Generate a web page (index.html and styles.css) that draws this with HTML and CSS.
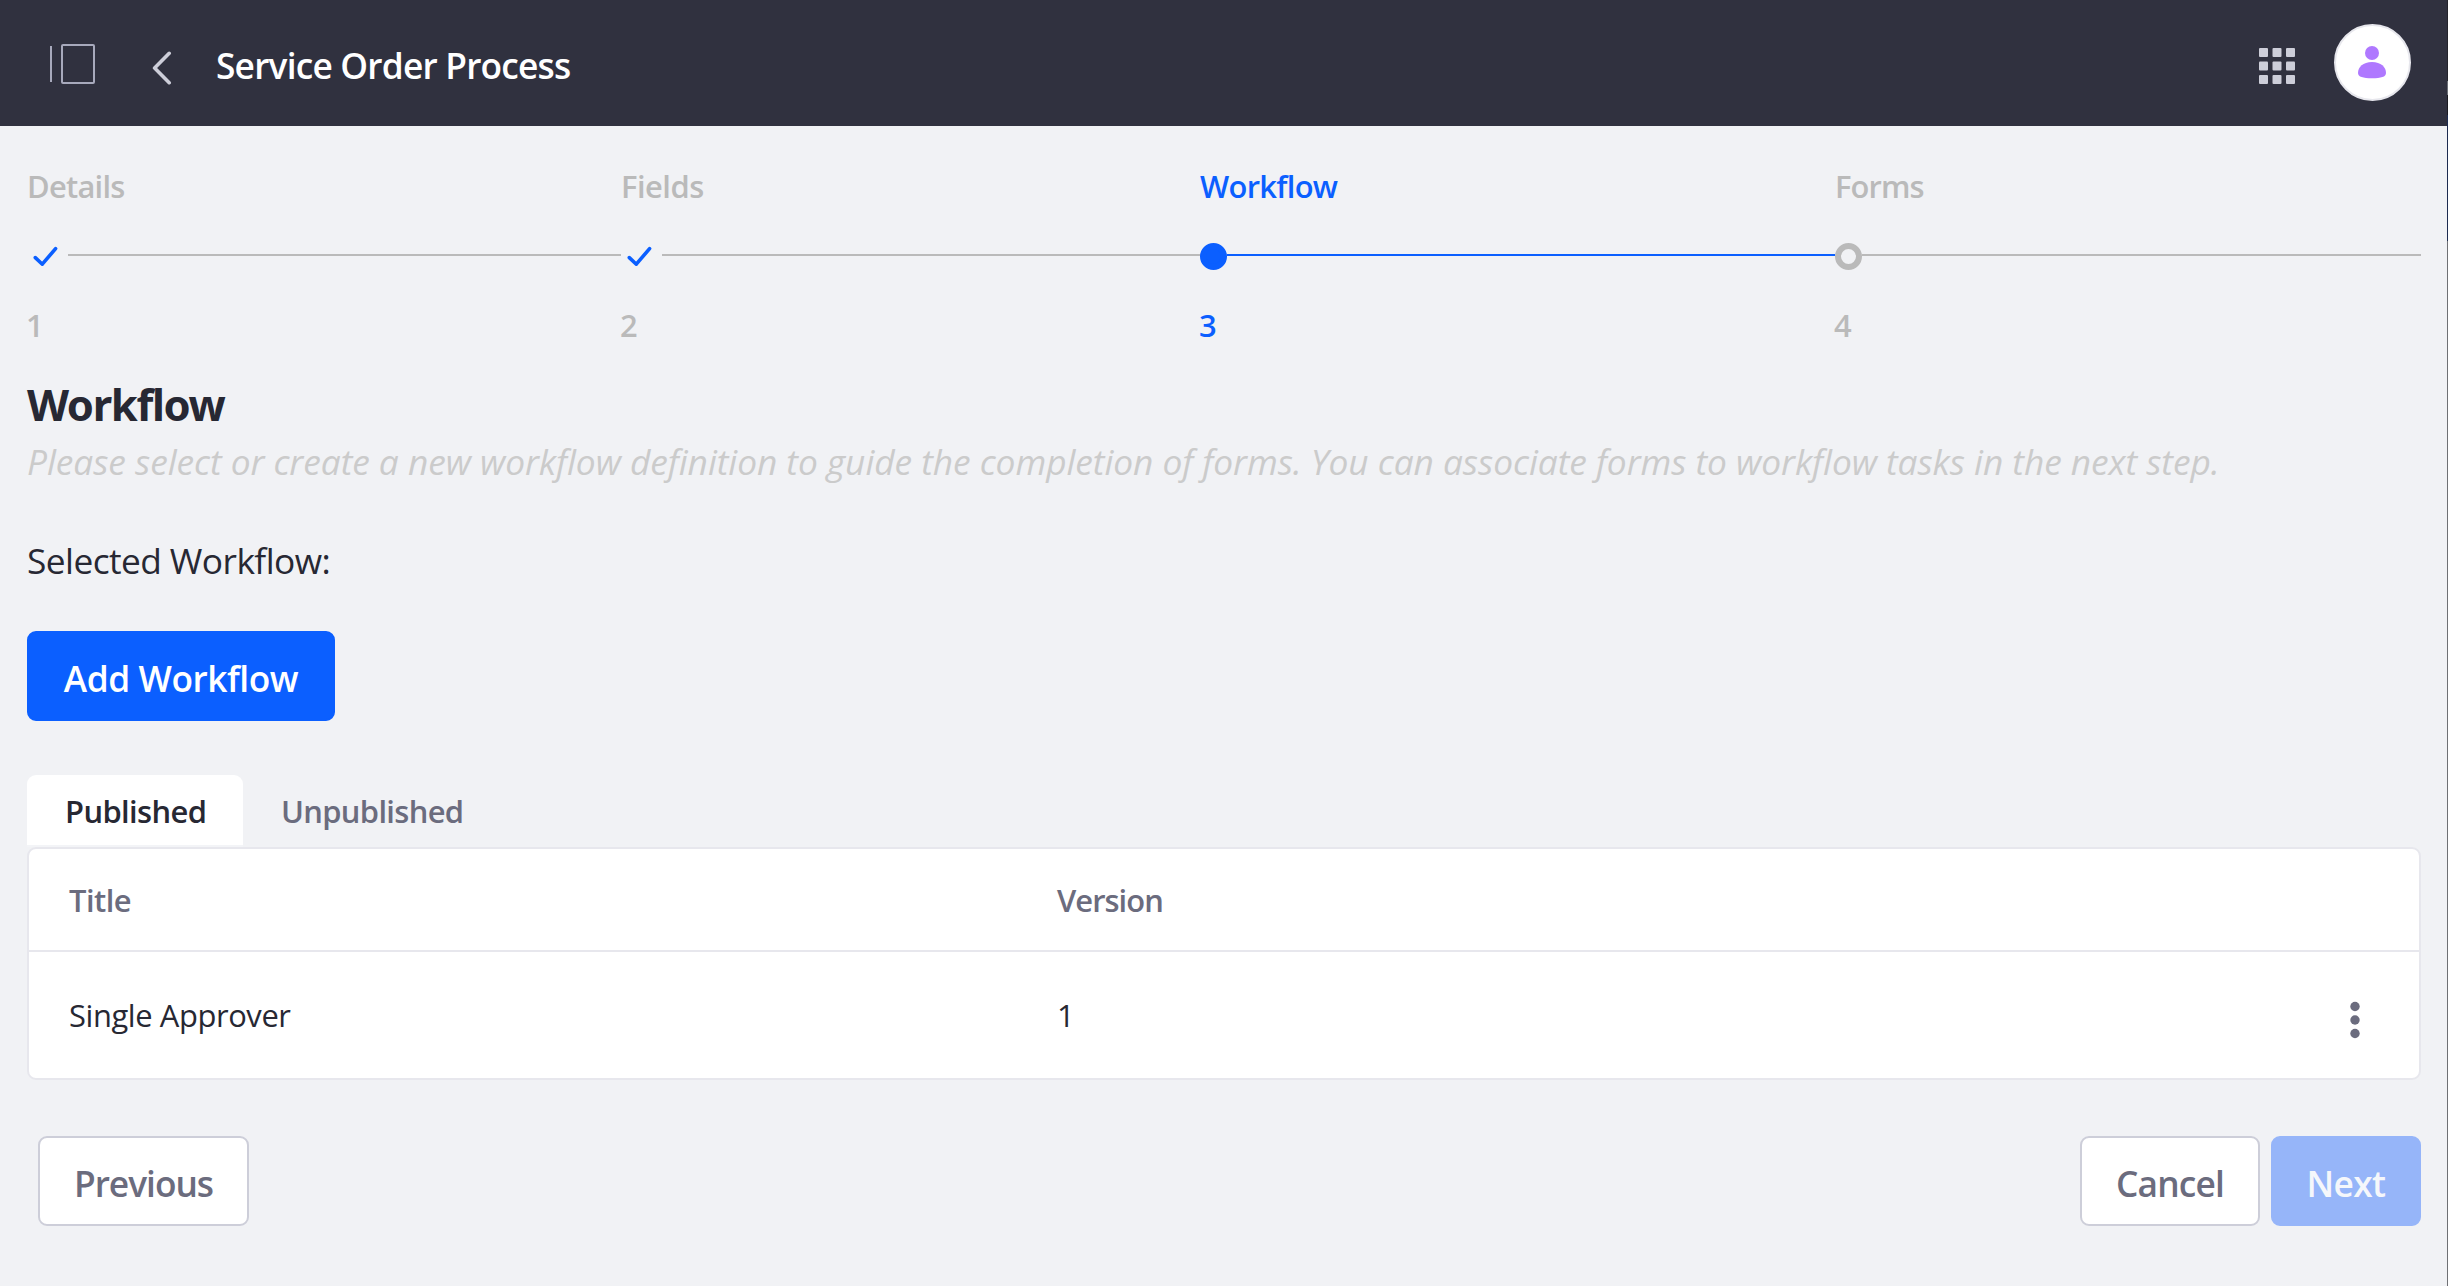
FILE: index.html
```
<!DOCTYPE html>
<html lang="en">
<head>
<meta charset="utf-8">
<title>Service Order Process</title>
<link rel="stylesheet" href="styles.css">
</head>
<body>
<header class="topbar">
  <svg class="icon-panel" width="46" height="40" viewBox="0 0 46 40" fill="none" stroke="#a7a9bc" stroke-width="2"><path d="M2 2v36"/><rect x="13" y="1" width="32" height="38" rx="1"/></svg>
  <svg class="icon-back" width="20" height="34" viewBox="0 0 20 34" fill="none" stroke="#cdced9" stroke-width="3.6" stroke-linecap="round" stroke-linejoin="round"><path d="M17.2 2.3 2.6 17 17.2 31.7"/></svg>
  <h1 class="topbar-title">Service Order Process</h1>
  <svg class="icon-apps" width="36" height="36" viewBox="0 0 36 36" fill="#cdced9"><rect width="9" height="9" rx="1"/><rect x="13.5" width="9" height="9" rx="1"/><rect x="27" width="9" height="9" rx="1"/><rect y="13.5" width="9" height="9" rx="1"/><rect x="13.5" y="13.5" width="9" height="9" rx="1"/><rect x="27" y="13.5" width="9" height="9" rx="1"/><rect y="27" width="9" height="9" rx="1"/><rect x="13.5" y="27" width="9" height="9" rx="1"/><rect x="27" y="27" width="9" height="9" rx="1"/></svg>
  <div class="avatar"><svg width="28" height="33" viewBox="0 0 28 33" fill="#af78ff"><circle cx="14" cy="7" r="7"/><path d="M14 16C5 16 0 21 0 27c0 4 5 5.2 14 5.2S28 31 28 27c0-6-5-11-14-11z"/></svg></div>
</header>

<main class="page">
  <ol class="steps">
    <li class="step">
      <span class="step-label details">Details</span>
      <span class="step-track"><svg class="check" width="41" height="27" viewBox="0 0 41 27"><path d="M8.3 14.6 15.3 21.2 28.6 5.6"/></svg><i class="line"></i></span>
      <span class="step-number">1</span>
    </li>
    <li class="step">
      <span class="step-label fields">Fields</span>
      <span class="step-track"><svg class="check" width="41" height="27" viewBox="0 0 41 27"><path d="M8.3 14.6 15.3 21.2 28.6 5.6"/></svg><i class="line"></i></span>
      <span class="step-number">2</span>
    </li>
    <li class="step active">
      <span class="step-label workflow">Workflow</span>
      <span class="step-track"><i class="dot"></i><i class="line"></i></span>
      <span class="step-number">3</span>
    </li>
    <li class="step">
      <span class="step-label forms">Forms</span>
      <span class="step-track"><i class="dot"></i><i class="line"></i></span>
      <span class="step-number">4</span>
    </li>
  </ol>

  <h2 class="heading">Workflow</h2>
  <p class="description">Please select or create a new workflow definition to guide the completion of forms. You can associate forms to workflow tasks in the next step.</p>
  <p class="selected">Selected Workflow:</p>
  <button class="btn btn-primary add">Add Workflow</button>

  <nav class="tabs">
    <a class="tab tab-active">Published</a>
    <a class="tab unpublished">Unpublished</a>
  </nav>
  <section class="table">
    <div class="row row-head"><span class="title-head">Title</span><span class="version-head">Version</span></div>
    <div class="row row-body">
      <span class="name">Single Approver</span><span class="version">1</span>
      <svg class="kebab" width="10" height="38" viewBox="0 0 10 38" fill="#6b6c7e"><circle cx="5" cy="5.5" r="4.7"/><circle cx="5" cy="19" r="4.7"/><circle cx="5" cy="32.5" r="4.7"/></svg>
    </div>
  </section>

  <footer class="actions">
    <button class="btn btn-secondary previous">Previous</button>
    <button class="btn btn-secondary cancel">Cancel</button>
    <button class="btn btn-primary next" disabled>Next</button>
  </footer>
</main>
<div class="window-edge"></div>
</body>
</html>
```
FILE: styles.css
```
* { box-sizing: border-box; }

body {
  margin: 0;
  min-height: 1286px;
  background: #f1f2f5;
  color: #272833;
  font-family: "Open Sans", "Noto Sans", sans-serif;
  font-size: 35.3px;
}

h1, h2, p, ol { margin: 0; padding: 0; }
svg { display: block; flex: none; }

.topbar {
  display: flex;
  align-items: center;
  height: 126px;
  padding: 0 37px 0 50px;
  background: #30313f;
}
.icon-panel { margin-top: 2px; margin-left: -1px; }
.icon-back { margin: 10px 0 0 57px; }
.topbar-title {
  flex: 1;
  margin-left: 44px;
  padding-top: 3px;
  color: #fff;
  font-size: 35.3px;
  font-weight: 600;
  line-height: 48px;
  letter-spacing: -.8px;
}
.icon-apps { margin: 6px 39px 0 0; }
.avatar {
  display: flex;
  align-items: center;
  justify-content: center;
  width: 77px;
  height: 77px;
  margin-top: -1px;
  padding-right: 1px;
  border: 2px solid #e7e7ed;
  border-radius: 50%;
  background: #fff;
}

.page { padding: 45px 27px 0; }

.steps {
  display: grid;
  grid-template-columns: 594px 579px 635px 586px;
  list-style: none;
}
.step {
  display: flex;
  flex-direction: column;
  color: #bababa;
  font-size: 30.9px;
  font-weight: 600;
  line-height: 30px;
}
.step.active { color: #0b5fff; }
.step-track {
  display: flex;
  height: 27px;
  margin: 42px 0 40px;
}
.step-number { margin-left: -1px; }
.details { letter-spacing: -.75px; }
.fields { letter-spacing: -.5px; }
.workflow { letter-spacing: -.7px; }
.forms { letter-spacing: -.9px; }
.line {
  flex: 1;
  height: 2px;
  margin-top: 11px;
  background: currentColor;
}
.check {
  fill: none;
  stroke: #0b5fff;
  stroke-width: 3.6;
  stroke-linecap: round;
  stroke-linejoin: round;
}
.dot {
  width: 27px;
  height: 27px;
  border: 6.75px solid currentColor;
  border-radius: 50%;
}
.active .dot { background: currentColor; }

.heading {
  margin-top: 37px;
  font-family: "Noto Sans", "Open Sans", sans-serif;
  font-size: 43.5px;
  font-weight: 700;
  line-height: 54px;
  letter-spacing: -1.35px;
}
.description {
  margin-top: 3px;
  color: #cbcbcb;
  font-style: italic;
  line-height: 54px;
  letter-spacing: -.06px;
  white-space: nowrap;
}
.selected {
  margin-top: 45px;
  line-height: 54px;
  letter-spacing: -.57px;
}

.btn {
  height: 90px;
  padding: 3px 0 0;
  border: 2px solid #cdced9;
  border-radius: 9px;
  background: #fff;
  color: #6b6c7e;
  font: 600 35.3px/48px "Open Sans", "Noto Sans", sans-serif;
}
.btn-primary { border-color: #0b5fff; background: #0b5fff; color: #fff; }
.add { display: block; width: 308px; margin-top: 44px; letter-spacing: -.45px; }

.tabs { display: flex; height: 72px; margin-top: 54px; }
.tab {
  padding: 0 38px;
  color: #6b6c7e;
  font-size: 30.9px;
  font-weight: 600;
  line-height: 72px;
}
.tab-active {
  width: 216px;
  border-radius: 9px 9px 0 0;
  background: linear-gradient(#fff 70px, #f3f4f7 70px);
  color: #272833;
  letter-spacing: -.6px;
}
.unpublished { letter-spacing: -.65px; }

.table {
  border: 2px solid #e7e7ed;
  border-radius: 9px;
  background: #fff;
  font-size: 30.9px;
}
.row {
  display: grid;
  grid-template-columns: 988px 1fr 10px;
  align-items: center;
  padding: 0 59px 0 40px;
}
.row-head {
  height: 103px;
  border-bottom: 2px solid #e7e7ed;
  color: #6b6c7e;
  font-weight: 600;
}
.row-body { height: 126px; }
.title-head { letter-spacing: -.55px; }
.version-head { letter-spacing: -.95px; }
.name { letter-spacing: -.4px; }
.kebab { margin-top: 10px; }

.actions { display: flex; margin-top: 56px; padding-left: 11px; }
.previous { width: 211px; margin-right: auto; letter-spacing: -1px; }
.cancel { width: 180px; margin-right: 11px; letter-spacing: -.8px; }
.next { width: 150px; border-color: #96b5f9; background: #96b5f9; color: #f5f7fb; letter-spacing: -.6px; }

.window-edge {
  position: fixed;
  top: 0;
  right: 0;
  bottom: 0;
  width: 1px;
  background: linear-gradient(#24242c 81px, #6b6f76 81px 95px, #1b1b22 95px 115px, #1d2b50 115px 241px, #6f7074 241px);
}
```
